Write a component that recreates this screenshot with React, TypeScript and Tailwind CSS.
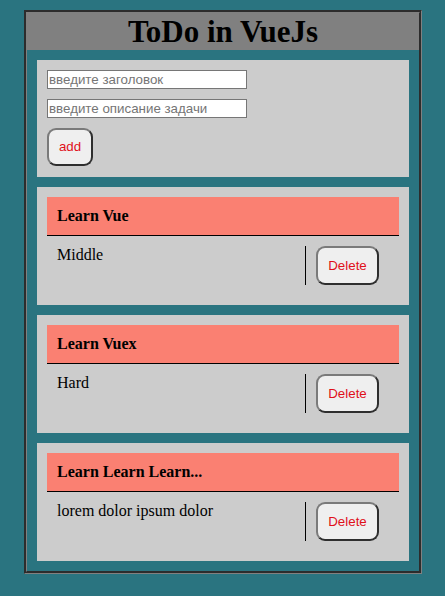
import React, { useState } from 'react';

type Task = { title: string; desc: string };

const btn =
  'rounded-[9px] border-2 border-t-[#7a7a7a] border-l-[#7a7a7a] border-r-[#2e2e2e] border-b-[#2e2e2e] bg-[#efefef] text-[13.33px] text-[#e0101a] font-["Liberation_Sans",Arial,sans-serif]';

const field =
  "h-[19px] w-[200px] border border-[#767676] bg-white px-[1px] text-[13.33px] font-['Liberation_Sans',Arial,sans-serif] text-black placeholder:text-[#757575] focus:outline-none";

export default function App() {
  const [tasks, setTasks] = useState<Task[]>([
    { title: 'Learn Vue', desc: 'Middle' },
    { title: 'Learn Vuex', desc: 'Hard' },
    { title: 'Learn Learn Learn...', desc: 'lorem dolor ipsum dolor' },
  ]);
  const [title, setTitle] = useState('');
  const [desc, setDesc] = useState('');

  const add = () => {
    if (!title.trim()) return;
    setTasks((prev) => [...prev, { title, desc }]);
    setTitle('');
    setDesc('');
  };

  return (
    <div className="min-h-[596px] bg-[#2a7480] pt-[10px] pl-[24px] font-['Liberation_Serif','Times_New_Roman',serif]">
      <div className="w-[398px] border-[3px] [border-style:groove] border-[#808080]">
        <h1 className="h-[37px] bg-[#808080] text-center text-[31px] font-bold leading-[37px] text-black">
          ToDo in VueJs
        </h1>
        <div className="flex flex-col gap-[10px] p-[10px]">
          {/* form */}
          <div className="flex flex-col items-start gap-[10px] bg-[#cccccc] px-[10px] pt-[10px] pb-[11px]">
            <input
              value={title}
              onChange={(e) => setTitle(e.target.value)}
              placeholder="введите заголовок"
              className={field}
            />
            <input
              value={desc}
              onChange={(e) => setDesc(e.target.value)}
              placeholder="введите описание задачи"
              className={field}
            />
            <button onClick={add} className={`h-[38px] w-[46px] ${btn}`}>
              add
            </button>
          </div>

          {tasks.map((t, i) => (
            <div key={i} className="bg-[#cccccc] p-[10px]">
              <div className="h-[39px] border-b border-black bg-[#fa8072] pl-[10px] text-[16px] font-bold leading-[38px] text-black">
                {t.title}
              </div>
              <div className="flex pl-[10px] pr-[20px] py-[10px]">
                <p className="flex-1 text-[16px] leading-[18px] text-black">{t.desc}</p>
                <div className="border-l border-black pl-[10px]">
                  <button
                    onClick={() => setTasks((prev) => prev.filter((_, j) => j !== i))}
                    className={`h-[39px] w-[63px] ${btn}`}
                  >
                    Delete
                  </button>
                </div>
              </div>
            </div>
          ))}
        </div>
      </div>
    </div>
  );
}
